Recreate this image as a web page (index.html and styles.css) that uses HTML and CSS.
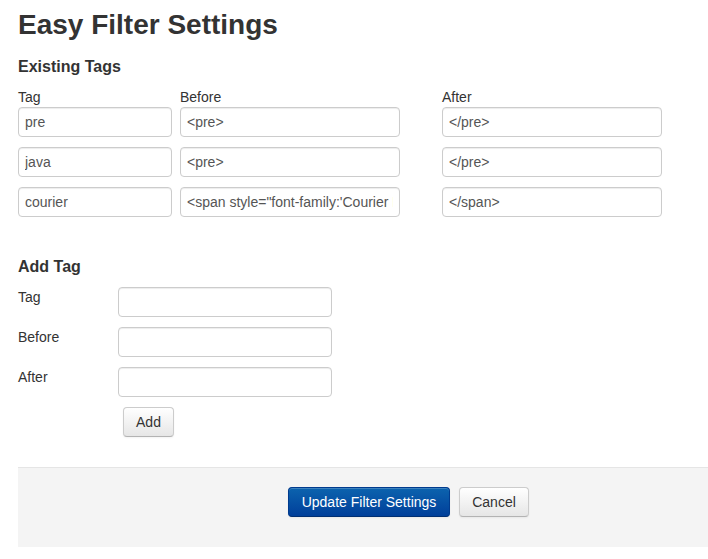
FILE: index.html
```html
<!DOCTYPE html>
<html>
<head>
<meta charset="utf-8">
<title>Easy Filter Settings</title>
<link rel="stylesheet" href="styles.css">
</head>
<body>
<div class="page">
  <h1 class="title">Easy Filter Settings</h1>
  <h4 class="section-title">Existing Tags</h4>
  <div class="tags-grid">
    <div class="col-label">Tag</div>
    <div class="col-label">Before</div>
    <div class="col-label">After</div>

    <input class="field" type="text" value="pre">
    <input class="field" type="text" value="&lt;pre&gt;">
    <input class="field" type="text" value="&lt;/pre&gt;">

    <input class="field" type="text" value="java">
    <input class="field" type="text" value="&lt;pre&gt;">
    <input class="field" type="text" value="&lt;/pre&gt;">

    <input class="field" type="text" value="courier">
    <input class="field" type="text" value="&lt;span style=&quot;font-family:'Courier New'&quot;&gt;">
    <input class="field" type="text" value="&lt;/span&gt;">
  </div>

  <h4 class="section-title add-title">Add Tag</h4>
  <div class="add-form">
    <div class="form-row">
      <label class="row-label">Tag</label>
      <input class="field add-field" type="text">
    </div>
    <div class="form-row">
      <label class="row-label">Before</label>
      <input class="field add-field" type="text">
    </div>
    <div class="form-row">
      <label class="row-label">After</label>
      <input class="field add-field" type="text">
    </div>
    <div class="form-row">
      <span class="row-label"></span>
      <button class="btn btn-add" type="button">Add</button>
    </div>
  </div>

  <div class="form-actions">
    <button class="btn btn-primary" type="button">Update Filter Settings</button>
    <button class="btn btn-cancel" type="button">Cancel</button>
  </div>
</div>
</body>
</html>
```

FILE: styles.css
```css
html, body {
  margin: 0;
  padding: 0;
  background: #ffffff;
}

body {
  font-family: "Liberation Sans", Arial, sans-serif;
  font-size: 14px;
  line-height: 20px;
  color: #333333;
}

.page {
  padding: 8px 0 0 18px;
}

.title {
  margin: 0;
  font-size: 28px;
  line-height: 34px;
  font-weight: bold;
  color: #333333;
}

.section-title {
  margin: 15px 0 11px;
  font-size: 16px;
  line-height: 20px;
  font-weight: bold;
  color: #333333;
}

.tags-grid {
  display: grid;
  grid-template-columns: 154px 220px 220px;
  column-gap: 8px;
  row-gap: 10px;
  align-items: start;
}

.tags-grid > .field:nth-child(3n) {
  margin-left: 34px;
}

.col-label {
  line-height: 19px;
  margin-bottom: -10px;
}

.col-label:nth-child(3) {
  margin-left: 34px;
}

.field {
  box-sizing: border-box;
  width: 100%;
  height: 30px;
  margin: 0;
  padding: 4px 6px;
  font-family: "Liberation Sans", Arial, sans-serif;
  font-size: 14px;
  line-height: 20px;
  color: #555555;
  background: #ffffff;
  border: 1px solid #cccccc;
  border-radius: 4px;
  box-shadow: inset 0 1px 1px rgba(0, 0, 0, 0.075);
  outline: none;
}

.add-title {
  margin-top: 40px;
  margin-bottom: 10px;
}

.add-form {
  display: flex;
  flex-direction: column;
  gap: 10px;
}

.form-row {
  display: flex;
  align-items: flex-start;
}

.row-label {
  width: 100px;
  flex: none;
  line-height: 20px;
}

.add-field {
  width: 214px;
}

.btn {
  display: inline-block;
  box-sizing: border-box;
  height: 30px;
  padding: 4px 12px;
  margin: 0;
  font-family: "Liberation Sans", Arial, sans-serif;
  font-size: 14px;
  line-height: 20px;
  color: #333333;
  text-align: center;
  background-color: #f5f5f5;
  background-image: linear-gradient(to bottom, #ffffff, #e6e6e6);
  border: 1px solid #cccccc;
  border-bottom-color: #b3b3b3;
  border-radius: 4px;
  box-shadow: inset 0 1px 0 rgba(255, 255, 255, 0.2), 0 1px 2px rgba(0, 0, 0, 0.05);
  cursor: pointer;
}

.btn-add {
  margin-left: 5px;
  width: 51px;
}

.form-actions {
  margin-top: 30px;
  padding: 19px 0 30px 270px;
  background: #f4f4f4;
  border-top: 1px solid #e5e5e5;
  display: flex;
  gap: 9px;
}

.btn-primary {
  width: 162px;
  color: #ffffff;
  background-color: #0a55a5;
  background-image: linear-gradient(to bottom, #0c63ae, #003f9a);
  border-color: #003b8e #003b8e #002f72;
}

.btn-cancel {
  width: 70px;
}
```
